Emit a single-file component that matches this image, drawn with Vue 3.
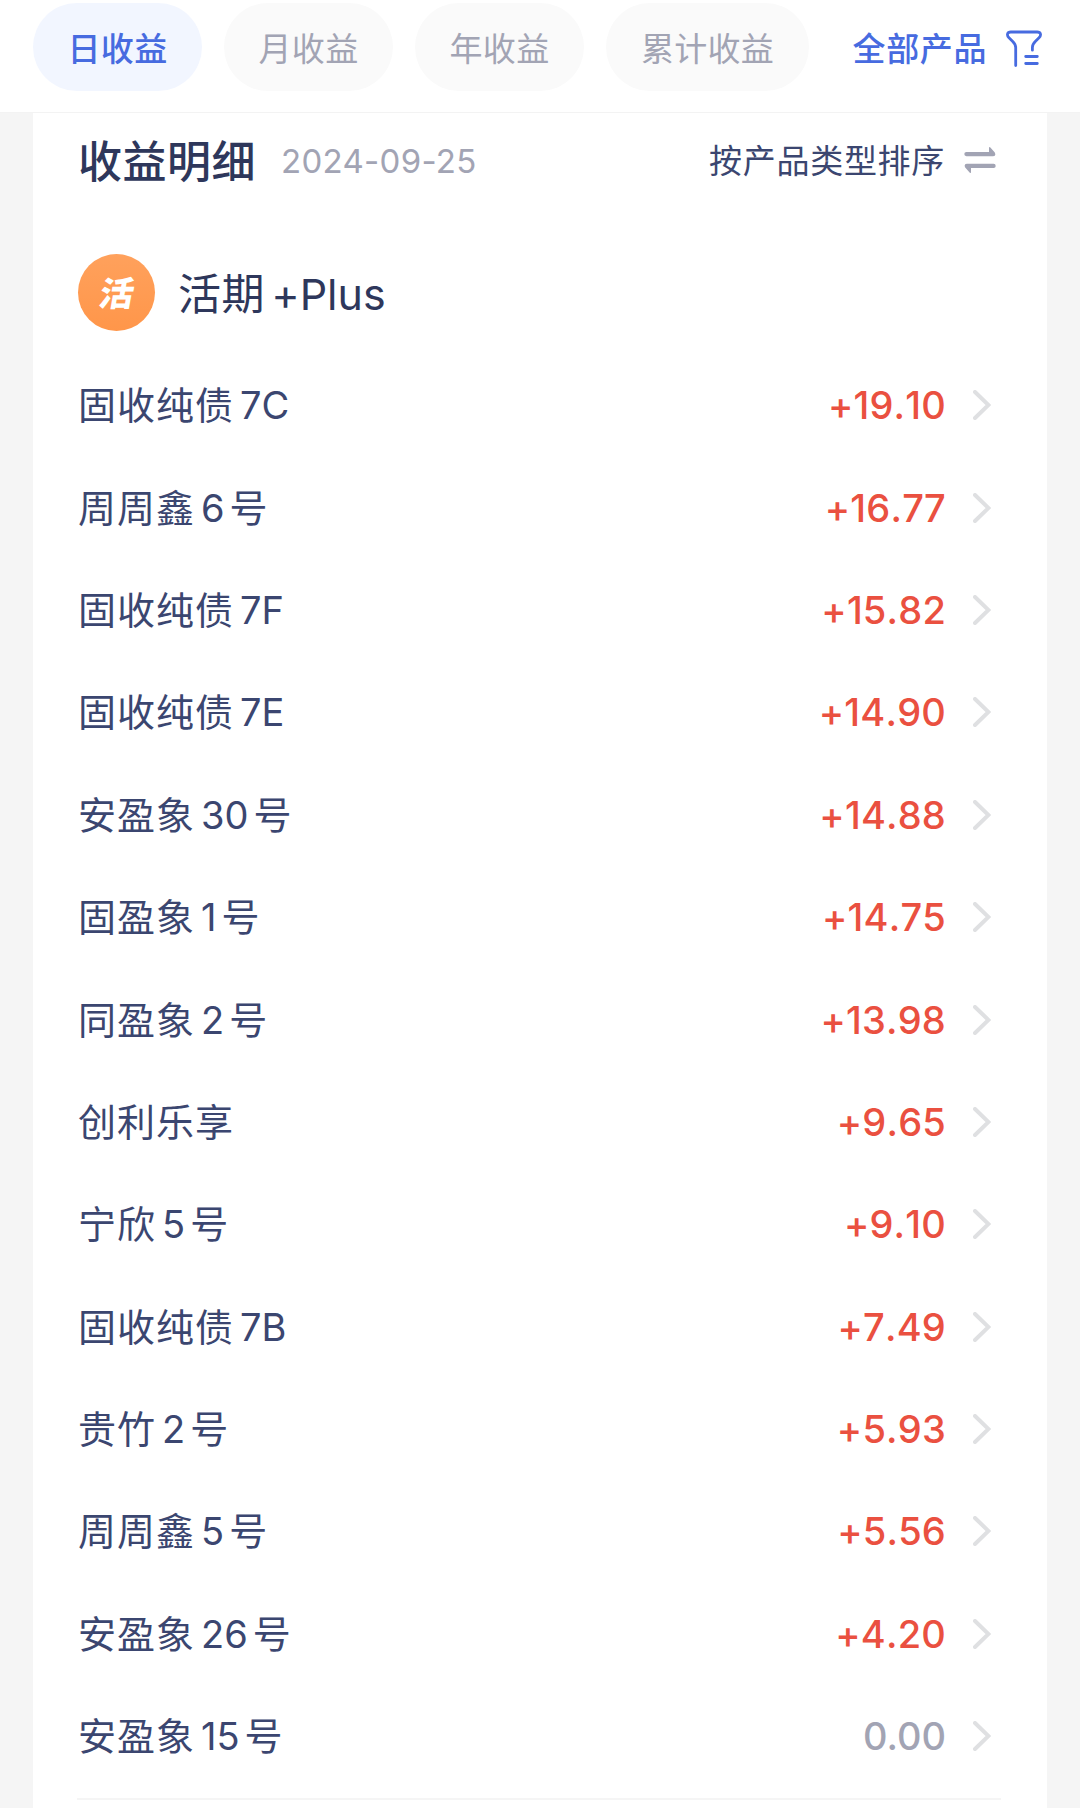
<template>
  <div class="page">
    <header class="tabs">
      <button
        v-for="tab in tabs"
        :key="tab"
        class="tab"
        :class="{ active: tab === activeTab }"
        @click="activeTab = tab"
      >{{ tab }}</button>
      <div class="filter">
        <span>全部产品</span>
        <svg class="filter-icon" width="36" height="38" viewBox="0 0 36 38">
          <path d="M9.7 35.5V17.5C9.7 14.5 8.6 13.2 6.5 11.2L3 7.8C0.3 5 1.3 2 4.8 2H31.2C34.7 2 35.7 5 33 7.8L29.5 11.2C27.4 13.2 26.4 14.5 26.4 17.5V20.2" />
          <path d="M19.7 26.5H31.3M19.7 33.5H31.3" />
        </svg>
      </div>
    </header>

    <main class="card">
      <div class="card-head">
        <h1>收益明细</h1>
        <span class="date">2024-09-25</span>
        <span class="sort">按产品类型排序</span>
        <svg class="sort-icon" width="32" height="28" viewBox="0 0 32 28">
          <path d="M2.4 6H25V2Q25 .2 26.4 1.5L30.8 6.4Q32.4 10.2 29.2 10.2H2.4A2.1 2.1 0 0 1 2.4 6Z" />
          <path d="M29.6 22H7V26Q7 27.8 5.6 26.5L1.2 21.6Q-.4 17.8 2.8 17.8H29.6A2.1 2.1 0 0 1 29.6 22Z" />
        </svg>
      </div>

      <div class="group">
        <div class="badge"><span>活</span></div>
        <div class="group-name">活期<span class="latin">+Plus</span></div>
      </div>

      <ul class="list">
        <li v-for="item in items" :key="item.name.join('')" class="row">
          <div class="name">
            {{ item.name[0] }}<span v-if="item.name[1]" class="latin">{{ item.name[1] }}</span>{{ item.name[2] }}
          </div>
          <span class="amount" :class="{ zero: item.amount === '0.00' }">{{ item.amount }}</span>
          <svg class="chevron" width="18" height="30" viewBox="0 0 18 30">
            <path d="M2 2L15.5 15L2 28" />
          </svg>
        </li>
      </ul>
      <div class="divider"></div>
    </main>
  </div>
</template>

<script setup>
import { ref } from 'vue'

const tabs = ['日收益', '月收益', '年收益', '累计收益']
const activeTab = ref('日收益')

// name is split into leading text, number/letter part, trailing text
const items = [
  { name: ['固收纯债', '7C'], amount: '+19.10' },
  { name: ['周周鑫', '6', '号'], amount: '+16.77' },
  { name: ['固收纯债', '7F'], amount: '+15.82' },
  { name: ['固收纯债', '7E'], amount: '+14.90' },
  { name: ['安盈象', '30', '号'], amount: '+14.88' },
  { name: ['固盈象', '1', '号'], amount: '+14.75' },
  { name: ['同盈象', '2', '号'], amount: '+13.98' },
  { name: ['创利乐享'], amount: '+9.65' },
  { name: ['宁欣', '5', '号'], amount: '+9.10' },
  { name: ['固收纯债', '7B'], amount: '+7.49' },
  { name: ['贵竹', '2', '号'], amount: '+5.93' },
  { name: ['周周鑫', '5', '号'], amount: '+5.56' },
  { name: ['安盈象', '26', '号'], amount: '+4.20' },
  { name: ['安盈象', '15', '号'], amount: '0.00' },
]
</script>

<style>
body {
  background: #f5f5f5;
}
</style>

<style scoped>
.page {
  height: 1808px;
  overflow: hidden;
  background: #f5f5f5;
  font-family: Inter, "Noto Sans CJK SC", sans-serif;
  color: #3b4670;
}
.tabs {
  display: flex;
  align-items: flex-start;
  gap: 22px;
  box-sizing: border-box;
  height: 113px;
  padding: 3px 38px 0 33px;
  background: #fff;
  border-bottom: 1px solid #f3f3f3;
}
.tab {
  display: flex;
  justify-content: center;
  flex: none;
  width: 169px;
  height: 88px;
  padding: 0;
  border: 0;
  border-radius: 44px;
  background: #fafafa;
  color: #a2a4b4;
  font-family: inherit;
  font-size: 33px;
  letter-spacing: 0.3px;
  line-height: 92px;
  white-space: nowrap;
}
.tab:nth-child(4) {
  width: 203px;
}
.tab.active {
  background: #f2f6ff;
  color: #476be0;
  font-weight: 500;
}
.filter {
  display: flex;
  align-items: center;
  gap: 19px;
  height: 91px;
  margin-left: auto;
  color: #476be0;
  font-size: 33px;
  font-weight: 500;
  letter-spacing: 0.6px;
}
.filter span {
  padding-bottom: 3px;
}
.filter-icon {
  fill: none;
  stroke: #476be0;
  stroke-width: 2.8;
  stroke-linecap: round;
  stroke-linejoin: round;
}
.card {
  height: 1700px;
  margin: 0 33px;
  padding: 0 45px;
  background: #fff;
}
.card-head {
  display: flex;
  align-items: center;
  box-sizing: border-box;
  height: 98px;
  padding-bottom: 4px;
}
h1 {
  margin: 0;
  padding-bottom: 3px;
  color: #2e375b;
  font-size: 44px;
  font-weight: 500;
  letter-spacing: 0.5px;
}
.date {
  margin-left: 25px;
  padding-top: 2px;
  color: #a2a4b4;
  font-size: 33px;
  letter-spacing: 0.3px;
}
.sort {
  margin-left: auto;
  padding-bottom: 2px;
  font-size: 33px;
  letter-spacing: 0.7px;
}
.sort-icon {
  margin: 0 6px 0 19px;
  fill: #a2a4b4;
}
.group {
  display: flex;
  align-items: center;
  padding: 43px 0 23px;
}
.badge {
  display: flex;
  align-items: center;
  justify-content: center;
  width: 77px;
  height: 77px;
  border-radius: 50%;
  background: linear-gradient(#ffa15c, #ff964a);
  color: #fff;
  font-size: 34px;
  font-weight: 900;
}
.badge span {
  padding-bottom: 3px;
  transform: skewX(-10deg);
}
.group-name {
  margin-left: 23px;
  padding-bottom: 4px;
  color: #2e375b;
  font-size: 43px;
  letter-spacing: 0.6px;
}
.list {
  margin: 0;
  padding: 0;
  list-style: none;
}
.row {
  display: flex;
  align-items: center;
  height: 102.4px;
}
.name {
  padding-bottom: 5px;
  font-size: 38px;
  letter-spacing: 1px;
}
.latin {
  margin: 0 5px 0 6px;
  letter-spacing: 0;
}
.amount {
  margin-left: auto;
  color: #ea5040;
  font-size: 38px;
  font-weight: 500;
  font-kerning: none;
  letter-spacing: 0.2px;
}
.amount.zero {
  color: #a2a4b4;
  font-kerning: normal;
  letter-spacing: 0;
}
.chevron {
  margin: 0 11px 0 27px;
  fill: none;
  stroke: #dfe0e2;
  stroke-width: 4;
  stroke-linecap: round;
}
.divider {
  height: 2px;
  margin: 11px 1px 0 -1px;
  background: #f5f5f5;
}
</style>
